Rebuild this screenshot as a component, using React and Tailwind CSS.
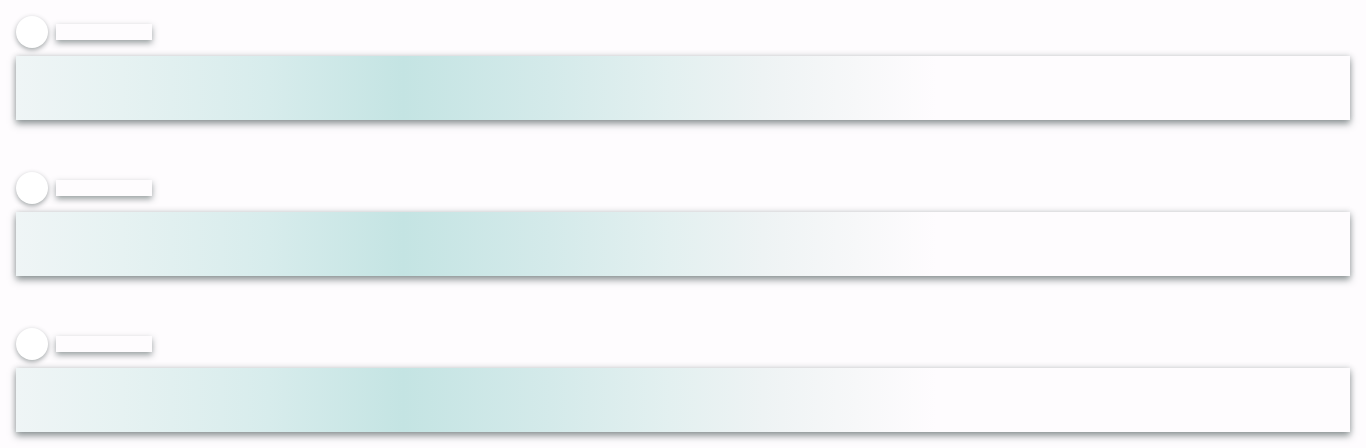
import React from 'react'

// Skeleton list placeholder
const SkeletonRow = () => (
  <div className="flex flex-col gap-2">
    <div className="flex items-center gap-2">
      <div className="w-8 h-8 rounded-full bg-white shadow-[0_2px_5px_rgba(50,65,65,0.45)]"></div>
      <div className="w-24 h-4 bg-[#fefcfe] shadow-[0_3px_6px_rgba(50,65,65,0.5)]"></div>
    </div>
    <div className="h-16 w-full bg-[linear-gradient(90deg,#eff5f6_0%,#e6f2f2_8%,#d7ecec_19%,#c4e4e3_29%,#d4eaea_40%,#e3f0f0_49%,#eef3f4_56%,#f7f8f9_63%,#fefcfe_69%,#fefcfe_100%)] shadow-[0_4px_7px_rgba(50,65,65,0.5),0_0_6px_rgba(50,65,65,0.2)]"></div>
  </div>
)

export default function App() {
  return (
    <div className="min-h-screen bg-[#fefcfe] px-4 pt-4 flex flex-col gap-[52px]">
      {[...Array(3)].map((_, i) => (
        <SkeletonRow key={i} />
      ))}
    </div>
  )
}
